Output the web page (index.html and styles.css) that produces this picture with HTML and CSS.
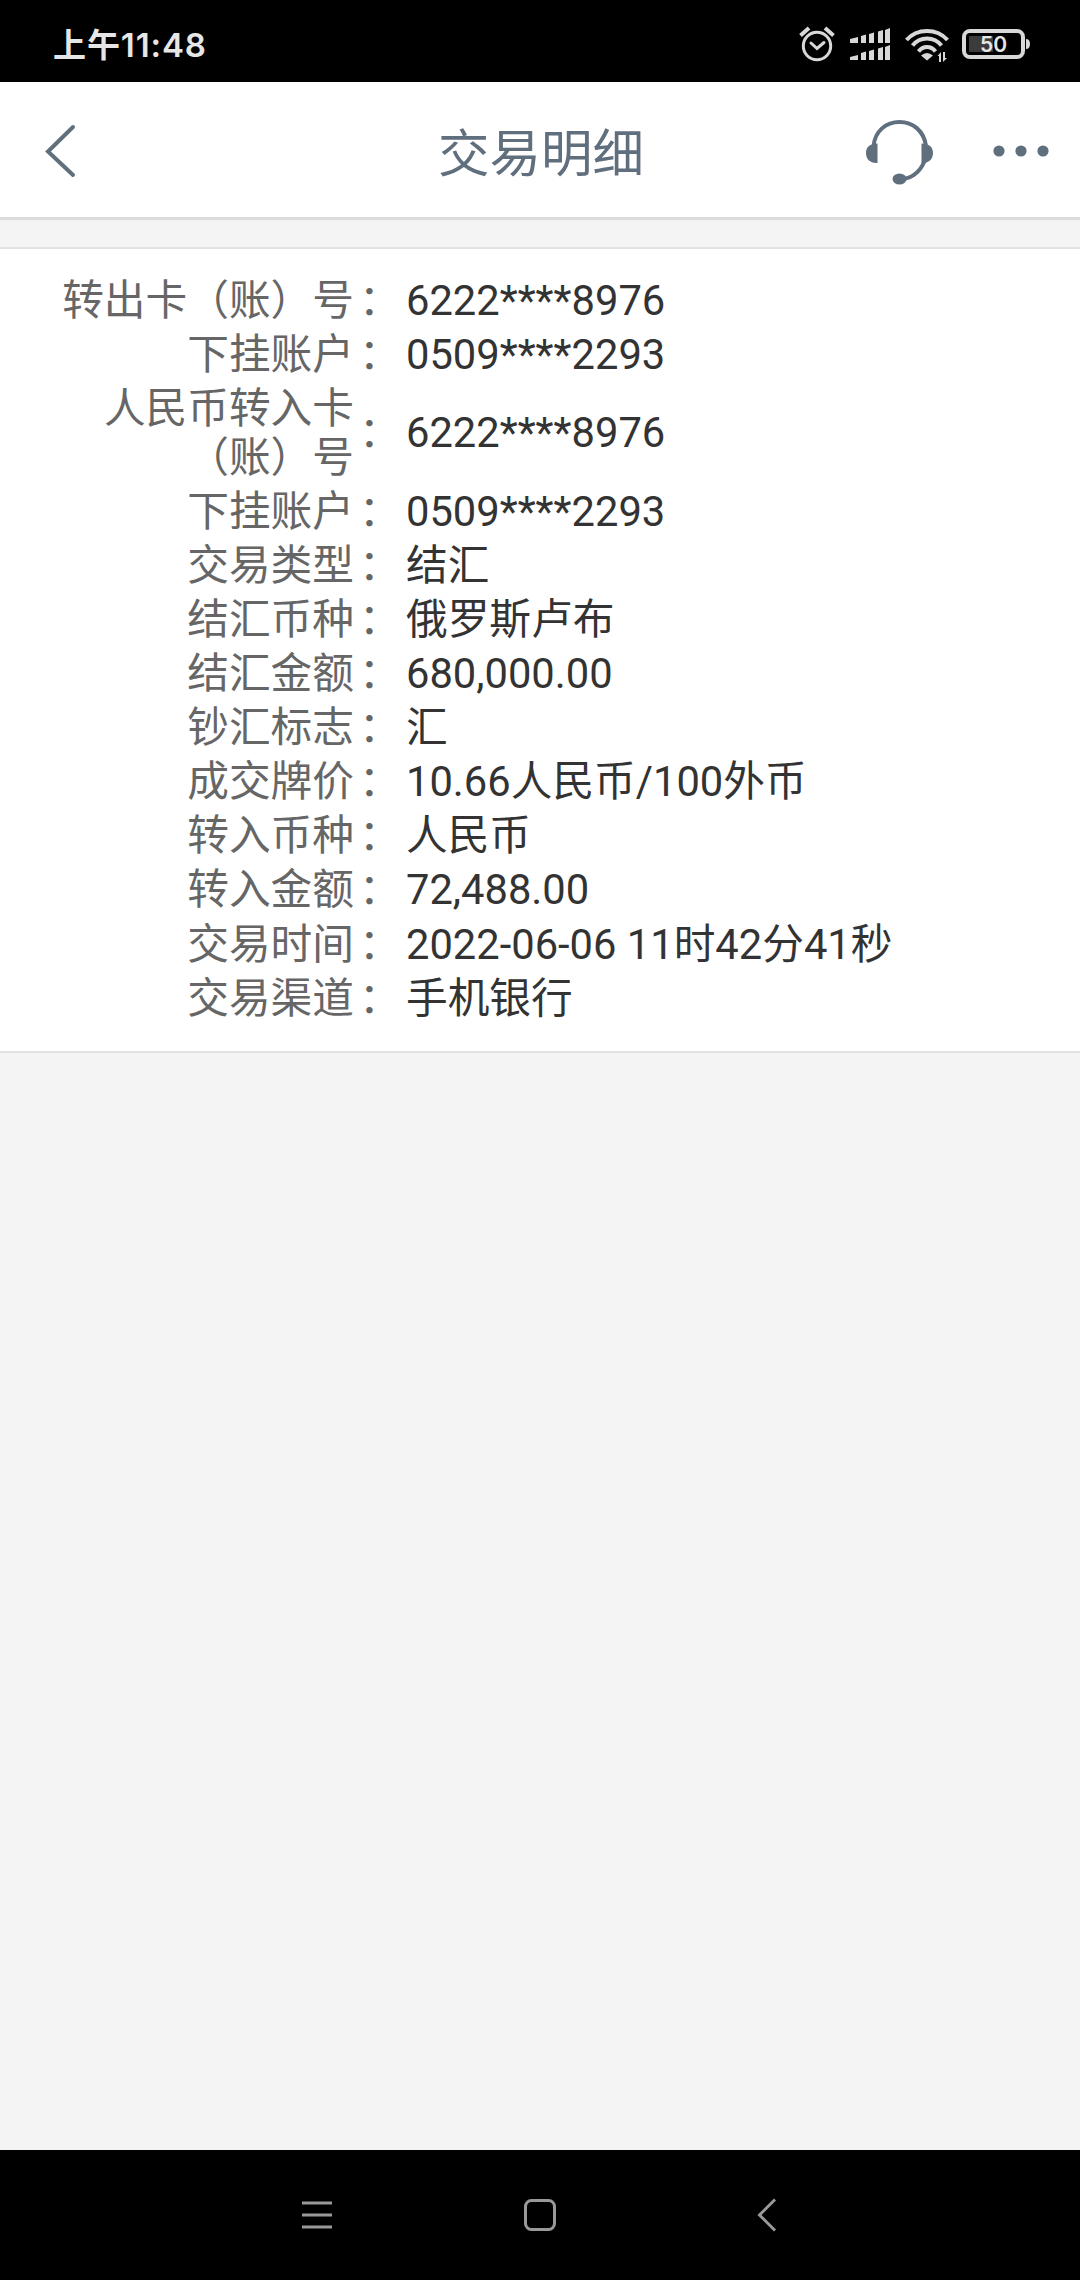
FILE: index.html
```
<!DOCTYPE html>
<html lang="zh-CN">
<head>
    <meta charset="UTF-8">
    <meta name="viewport" content="width=device-width, initial-scale=1.0">
    <title>交易明细</title>
    <link rel="stylesheet" href="styles.css">
</head>
<body>

    <!-- Status bar -->
    <div class="status-bar">
        <span class="time">上午11:48</span>
        <svg class="status-icons" width="240" height="40" viewBox="0 0 240 40">
            <g fill="none" stroke="#d8d8d8" stroke-width="3">
                <circle cx="18" cy="20" r="13.7"/>
                <path d="M12 17l6 5.500 7-6" stroke-linecap="round"/>
                <path d="M1.500 9.500l8.500-7.500M26 2l8.500 7.500" stroke-width="4"/>
            </g>
            <path fill="#d8d8d8" d="M51 13l8-2v6h-8zM62 10l5-1.500v8.500h-5zM70 8l5-1.500v10.500h-5zM79 5.500l5-1.500v13h-5zM86 4l5-2v15h-5z"/>
            <path fill="#d8d8d8" d="M51 31l8-2v5h-8zM62 27l5-1.500v8.500h-5zM70 25l5-1.500v10.500h-5zM79 22.500l5-1.500v13h-5zM86 21l5-2v15h-5z"/>
            <g fill="none" stroke="#d8d8d8" stroke-width="4">
                <path d="M107.500 14C118 2 138 2 148.500 14"/>
                <path d="M113.500 19.500C121 10 135 10 142.500 19.500"/>
                <path d="M119.500 25.500C124 19.500 132 19.500 136.500 25.500"/>
            </g>
            <path fill="#d8d8d8" d="M122 29.500q6-5 12 0l-6 5z"/>
            <path fill="#d8d8d8" d="M138.500 30l3.500-4v10h-2v-6zM144 26h2v6h2l-4 4z"/>
            <rect x="170" y="10" width="24" height="16" fill="#3b3b3b"/>
            <rect x="165" y="5" width="59" height="26" rx="6" fill="none" stroke="#d8d8d8" stroke-width="4"/>
            <path d="M227 13q4 0 4 5t-4 5z" fill="#d8d8d8"/>
            <text class="battery" x="194.500" y="25.500" text-anchor="middle">50</text>
        </svg>
    </div>

    <!-- Page header -->
    <div class="header">
        <svg class="back" width="32" height="54" viewBox="0 0 32 54">
            <path d="M28 3L3 27.500L28 51"/>
        </svg>
        <h1>交易明细</h1>
        <div class="actions">
            <svg width="70" height="68" viewBox="0 0 70 68">
                <g fill="none" stroke="#5f6f7d" stroke-width="4">
                    <path d="M8.500 29C10 14 21 5 34.500 5S59 14 61 29"/>
                    <path d="M61 40C57 53 49 61 36 62.500"/>
                </g>
                <path fill="#5f6f7d" d="M12.500 26.500V46C5 46.500 1 42 1 36S5 26.500 12.500 26.500zM56.500 26.500V46C64 46.500 68 42 68 36S64 26.500 56.500 26.500z"/>
                <ellipse cx="34.500" cy="62" rx="7" ry="5.500" fill="#5f6f7d"/>
            </svg>
            <svg width="56" height="12" viewBox="0 0 56 12" fill="#5f6f7d">
                <circle cx="6" cy="6" r="5.600"/>
                <circle cx="28" cy="6" r="5.600"/>
                <circle cx="50" cy="6" r="5.600"/>
            </svg>
        </div>
    </div>

    <!-- Transaction details -->
    <div class="detail">
        <div class="row"><span class="label">转出卡（账）号</span><span class="colon">：</span><span class="value">6222****8976</span></div>
        <div class="row"><span class="label">下挂账户</span><span class="colon">：</span><span class="value">0509****2293</span></div>
        <div class="row"><span class="label">人民币转入卡<br>（账）号</span><span class="colon">：</span><span class="value">6222****8976</span></div>
        <div class="row"><span class="label">下挂账户</span><span class="colon">：</span><span class="value">0509****2293</span></div>
        <div class="row"><span class="label">交易类型</span><span class="colon">：</span><span class="value">结汇</span></div>
        <div class="row"><span class="label">结汇币种</span><span class="colon">：</span><span class="value">俄罗斯卢布</span></div>
        <div class="row"><span class="label">结汇金额</span><span class="colon">：</span><span class="value">680,000.00</span></div>
        <div class="row"><span class="label">钞汇标志</span><span class="colon">：</span><span class="value">汇</span></div>
        <div class="row"><span class="label">成交牌价</span><span class="colon">：</span><span class="value">10.66人民币/100外币</span></div>
        <div class="row"><span class="label">转入币种</span><span class="colon">：</span><span class="value">人民币</span></div>
        <div class="row"><span class="label">转入金额</span><span class="colon">：</span><span class="value">72,488.00</span></div>
        <div class="row"><span class="label">交易时间</span><span class="colon">：</span><span class="value">2022-06-06 11时42分41秒</span></div>
        <div class="row"><span class="label">交易渠道</span><span class="colon">：</span><span class="value">手机银行</span></div>
    </div>

    <!-- System navigation -->
    <div class="nav-bar">
        <svg width="34" height="34" viewBox="0 0 34 34">
            <path d="M2 5h30M2 17h30M2 29h30"/>
        </svg>
        <svg width="34" height="34" viewBox="0 0 34 34">
            <rect x="2.500" y="2.500" width="29" height="29" rx="6"/>
        </svg>
        <svg width="34" height="34" viewBox="0 0 34 34">
            <path d="M29 1.500L13.500 17L29 32.500"/>
        </svg>
    </div>

</body>
</html>
```
FILE: styles.css
```
* {
    box-sizing: border-box;
}

body {
    margin: 0;
    height: 2280px;
    display: flex;
    flex-direction: column;
    background-color: #f4f4f4;
    font-family: Roboto, "Noto Sans CJK SC", sans-serif;
}

svg {
    display: block;
}

/* Status bar */
.status-bar {
    display: flex;
    justify-content: space-between;
    height: 82px;
    padding: 26px 41px 0 53px;
    background: #000;
    color: #e6e6e6;
}

.time {
    font-family: Inter, "Noto Sans CJK SC", sans-serif;
    font-size: 33px;
    font-weight: 600;
    line-height: 38px;
    letter-spacing: 0.9px;
}

.battery {
    font-family: Inter, sans-serif;
    font-size: 21px;
    font-weight: 600;
    fill: #e6e6e6;
}

/* Header */
.header {
    display: grid;
    grid-template-columns: 1fr auto 1fr;
    align-items: center;
    height: 138px;
    padding: 2px 31px 0 45px;
    background: #fff;
    border-bottom: 3px solid #dcdcdc;
}

.header h1 {
    margin: 0;
    padding: 8px 12px 0 0;
    color: #5f6f7d;
    font-size: 51.5px;
    font-weight: 400;
    line-height: 60px;
}

.back {
    fill: none;
    stroke: #5f6f7d;
    stroke-width: 4;
    stroke-linecap: round;
}

.actions {
    display: flex;
    align-items: center;
    justify-content: flex-end;
    gap: 58px;
}

/* Details */
.detail {
    margin-top: 27px;
    padding: 25px 0 25px;
    background: #fff;
    border-top: 2px solid #e2e2e2;
    border-bottom: 2px solid #e2e2e2;
}

.row {
    display: flex;
    align-items: center;
    padding: 2.6px 0;
    font-size: 41.7px;
    line-height: 48.9px;
}

.label {
    width: 354px;
    color: #666;
    text-align: right;
}

.colon {
    width: 52px;
    padding-left: 5px;
    color: #666;
}

.value {
    color: #333;
}

/* System navigation */
.nav-bar {
    display: flex;
    justify-content: center;
    align-items: center;
    gap: 189px;
    height: 130px;
    margin-top: auto;
    background: #000;
}

.nav-bar svg {
    fill: none;
    stroke: #999;
    stroke-width: 3;
}
```
